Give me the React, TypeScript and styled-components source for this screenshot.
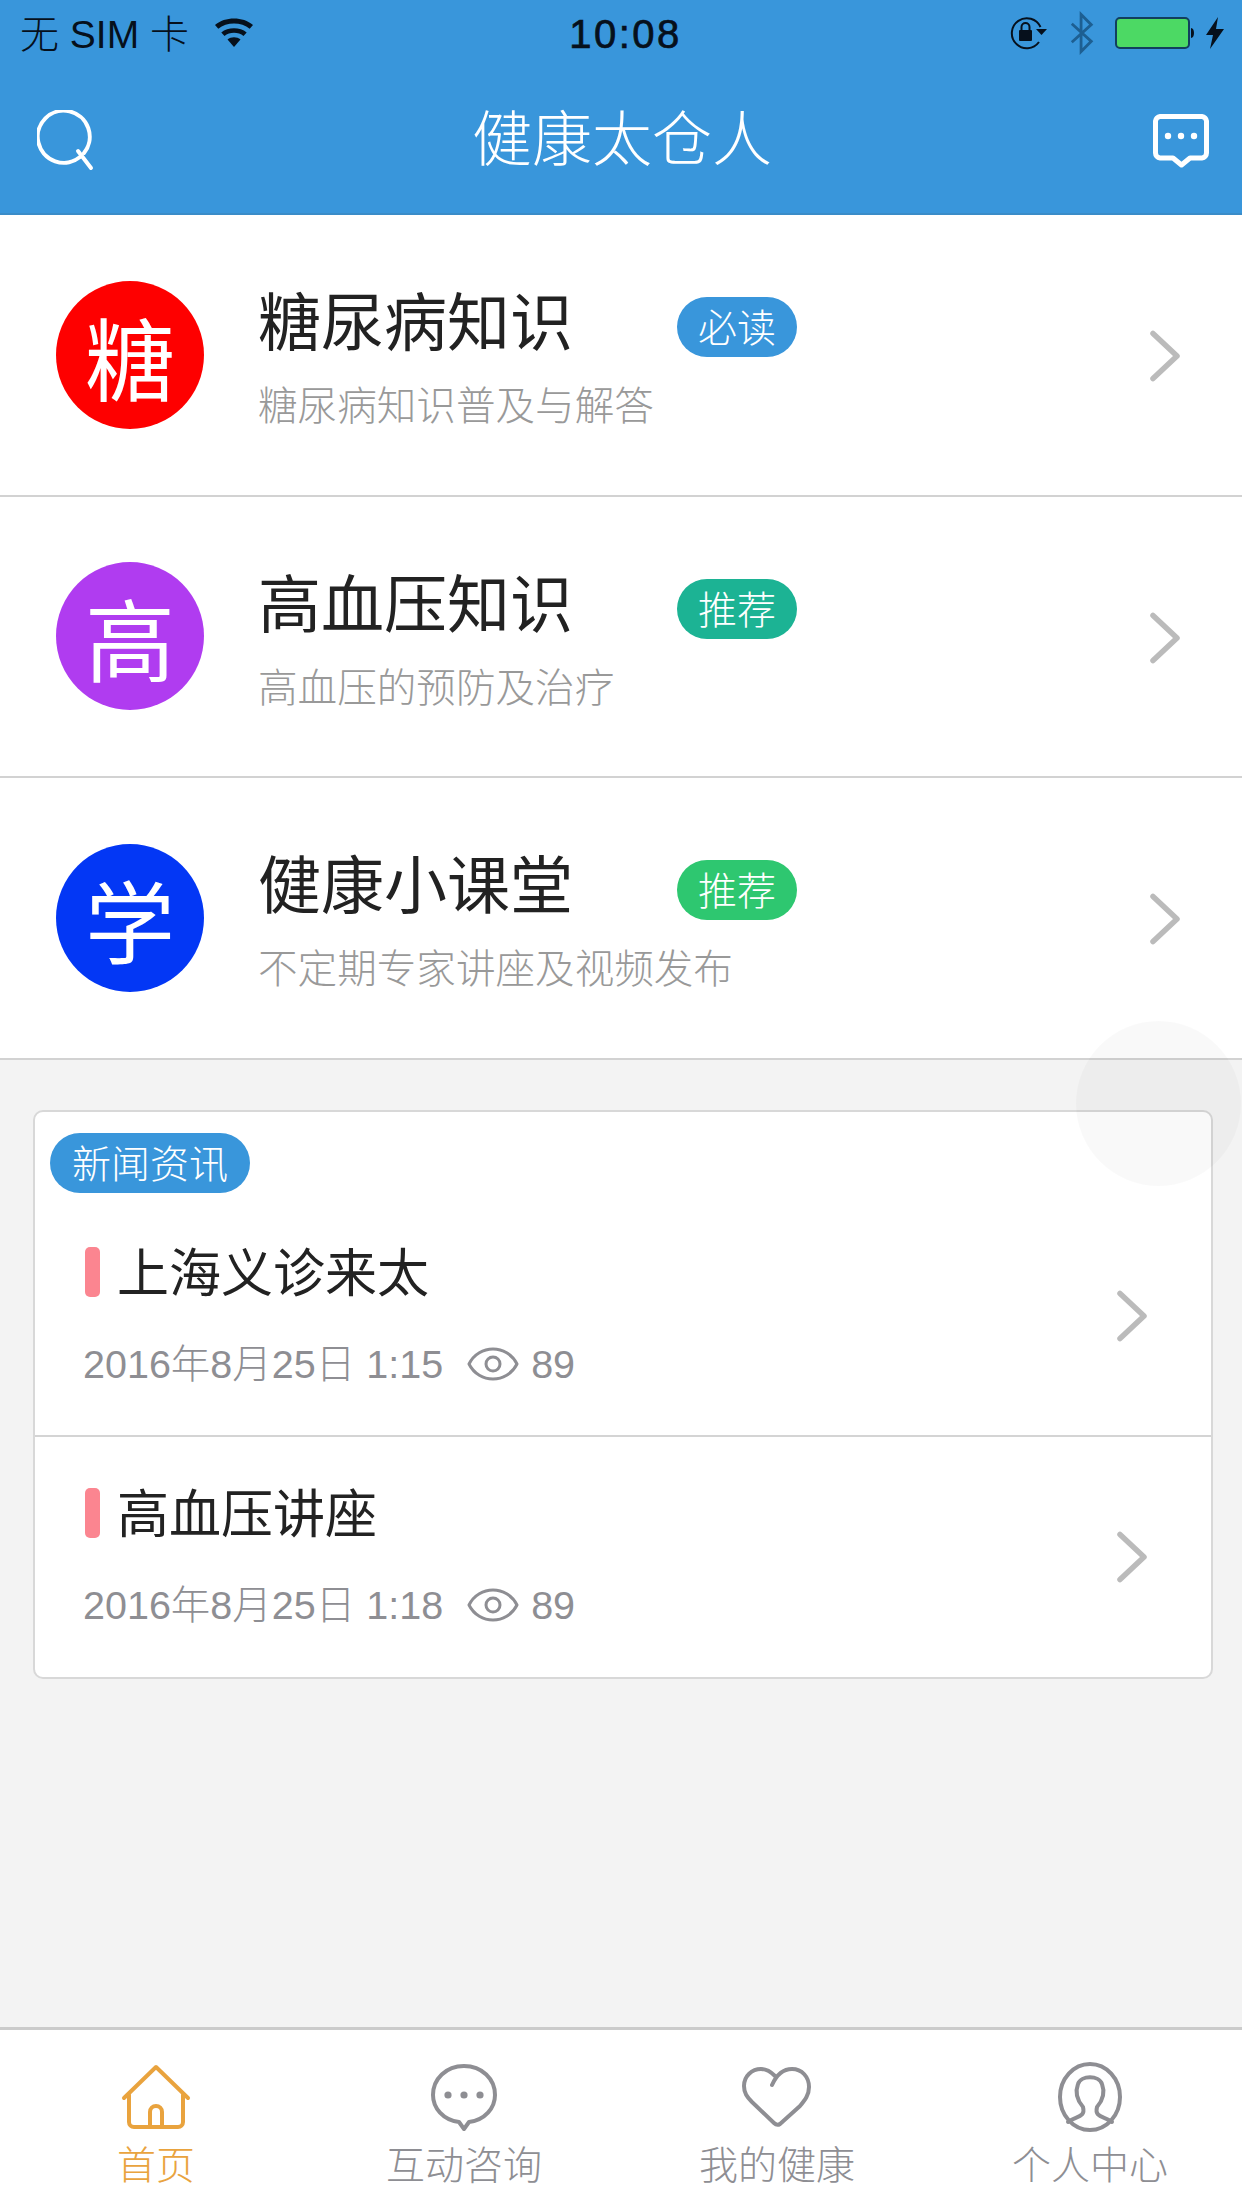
import React from 'react';
import styled, { createGlobalStyle } from 'styled-components';

const Global = createGlobalStyle`
  html, body { margin: 0; padding: 0; background: #f3f3f3; }
  body { font-family: "Liberation Sans", "Noto Sans CJK SC", sans-serif; }
  * { box-sizing: border-box; }
`;

const Page = styled.div`
  position: relative;
  width: 1242px;
  height: 2208px;
  display: flex;
  flex-direction: column;
  overflow: hidden;
  background: #f3f3f3;
`;

const TopBlock = styled.header`
  height: 215px;
  background: #3996db;
  border-bottom: 2px solid #3a8cc8;
  display: flex;
  flex-direction: column;
`;

const StatusBar = styled.div`
  height: 66px;
  padding: 0 17px 0 20px;
  display: grid;
  grid-template-columns: 1fr auto 1fr;
  align-items: center;
  color: #06101c;
`;

const StatusLeft = styled.div`
  display: flex;
  align-items: center;
  gap: 24px;
  font-size: 39px;
  font-weight: 300;
`;

const StatusText = styled.span`
  margin-bottom: 4px;
`;

const Time = styled.div`
  font-size: 40px;
  letter-spacing: 2.5px;
  margin: 2px 0 0 6px;
  font-family: "Liberation Sans", sans-serif;
  -webkit-text-stroke: 0.7px #06101c;
`;

const StatusRight = styled.div`
  display: flex;
  justify-content: flex-end;
  align-items: center;
  gap: 20px;
`;

const PowerGroup = styled.div`
  display: flex;
  align-items: center;
  gap: 8px;
`;

const NavBar = styled.div`
  flex: 1;
  display: flex;
  align-items: center;
  justify-content: space-between;
  padding: 3px 33px 0 37px;
`;

const NavTitle = styled.div`
  color: #fff;
  font-size: 60px;
  font-weight: 300;
  margin: 0 6px 14px 0;
`;

const List = styled.section`
  background: #fff;
`;

const Row = styled.div`
  height: 281.5px;
  border-bottom: 2px solid #d2d2d2;
  display: flex;
  align-items: center;
  padding: 0 61px 0 56px;
`;

const Avatar = styled.div<{ $bg: string }>`
  width: 148px;
  height: 148px;
  border-radius: 50%;
  background: ${p => p.$bg};
  color: #fff;
  font-size: 90px;
  font-weight: 400;
  display: flex;
  align-items: center;
  justify-content: center;
  flex: none;
  margin-right: 54px;
`;

const RowBody = styled.div`
  flex: 1;
  display: flex;
  flex-direction: column;
  gap: 20px;
  padding-top: 7px;
`;

const TitleLine = styled.div`
  display: flex;
  align-items: center;
`;

const RowTitle = styled.div`
  width: 419px;
  font-size: 63px;
  line-height: 76px;
  color: #222;
  font-weight: 400;
`;

const Tag = styled.span<{ $bg: string }>`
  width: 120px;
  height: 60px;
  border-radius: 30px;
  background: ${p => p.$bg};
  color: #fff;
  font-size: 39px;
  font-weight: 300;
  padding-bottom: 4px;
  display: flex;
  align-items: center;
  justify-content: center;
  margin-top: 8px;
`;

const RowSub = styled.div`
  font-size: 39.6px;
  line-height: 50px;
  color: #999;
  font-weight: 300;
`;

const Content = styled.main`
  flex: 1;
  padding: 50px 29px 0 33px;
`;

const Card = styled.section`
  height: 569px;
  background: #fff;
  border: 2px solid #d8d8d8;
  border-radius: 10px;
  display: flex;
  flex-direction: column;
  position: relative;
`;

const CardTag = styled.span`
  position: absolute;
  left: 15px;
  top: 21px;
  width: 200px;
  height: 60px;
  border-radius: 30px;
  background: #3996db;
  color: #fff;
  font-size: 39px;
  font-weight: 300;
  padding-bottom: 4px;
  display: flex;
  align-items: center;
  justify-content: center;
`;

const NewsRow = styled.div<{ $first?: boolean }>`
  flex: none;
  height: ${p => (p.$first ? 325 : 241)}px;
  padding: ${p => (p.$first ? 132 : 48)}px 63px 0 50px;
  border-bottom: ${p => (p.$first ? '2px solid #d4d4d4' : 'none')};
  display: flex;
  align-items: flex-start;
  justify-content: space-between;
`;

const NewsBody = styled.div`
  display: flex;
  flex-direction: column;
  gap: 35px;
`;

const NewsTitleLine = styled.div`
  display: flex;
  align-items: center;
  gap: 17px;
`;

const Mark = styled.i`
  width: 15px;
  height: 50px;
  border-radius: 5px;
  background: #fb8590;
  margin-top: -3px;
`;

const NewsTitle = styled.div`
  font-size: 52px;
  line-height: 60px;
  color: #222;
  font-weight: 400;
`;

const Meta = styled.div`
  display: flex;
  align-items: center;
  font-size: 39.5px;
  line-height: 50px;
  color: #8e8e93;
  font-weight: 300;
  margin-left: -2px;
`;

const Views = styled.span`
  display: flex;
  align-items: center;
  gap: 12px;
  margin-left: 24px;
`;

const ChevronBox = styled.div<{ $top?: number }>`
  display: flex;
  flex: none;
  margin-top: ${p => p.$top ?? 0}px;
`;

const Floating = styled.div`
  position: absolute;
  left: 1076px;
  top: 1021px;
  width: 165px;
  height: 165px;
  border-radius: 50%;
  background: rgba(0, 0, 0, 0.022);
  pointer-events: none;
`;

const TabBar = styled.nav`
  height: 181px;
  background: #fff;
  border-top: 3px solid #cbcbcb;
  display: grid;
  grid-template-columns: 312px 304px 322px 304px;
`;

const Tab = styled.div<{ $active?: boolean }>`
  display: flex;
  flex-direction: column;
  align-items: center;
  padding-top: 32px;
  color: ${p => (p.$active ? '#e9a33e' : '#8e8e93')};
  font-size: 39px;
  line-height: 50px;
  font-weight: 300;
`;

const TabIcon = styled.svg`
  width: 70px;
  height: 70px;
  margin-bottom: 9px;
  fill: none;
  stroke: currentColor;
  stroke-width: 4;
  stroke-linecap: round;
  stroke-linejoin: round;
`;

const Chevron = () => (
  <svg width="32" height="52" viewBox="0 0 32 52" fill="none" stroke="#bbbbbb" strokeWidth="5.5" strokeLinecap="round" strokeLinejoin="round">
    <path d="M4 3.5 L28 26 L4 48.5" />
  </svg>
);

const rows = [
  { c: '糖', bg: '#fe0000', t: '糖尿病知识', tag: '必读', tagBg: '#3996db', s: '糖尿病知识普及与解答' },
  { c: '高', bg: '#b03cf0', t: '高血压知识', tag: '推荐', tagBg: '#1cb394', s: '高血压的预防及治疗' },
  { c: '学', bg: '#0337f5', t: '健康小课堂', tag: '推荐', tagBg: '#2ec770', s: '不定期专家讲座及视频发布' },
];

const news = [
  { t: '上海义诊来太', d: '2016年8月25日 1:15' },
  { t: '高血压讲座', d: '2016年8月25日 1:18' },
];

export default function App() {
  return (
    <Page>
      <Global />
      <TopBlock>
        <StatusBar>
          <StatusLeft>
            <StatusText>无 SIM 卡</StatusText>
            <svg width="42" height="32" viewBox="0 0 42 32" fill="#06101c">
              <path d="M21 30 L14.5 22.5 C18 19.5 24 19.5 27.5 22.5 Z" />
              <path d="M11.5 19 L8.3 15.4 C15 9.8 27 9.8 33.7 15.4 L30.5 19 C25.5 14.6 16.5 14.6 11.5 19 Z" />
              <path d="M5.3 11.8 L2 8 C12 -0.6 30 -0.6 40 8 L36.7 11.8 C28.5 4.6 13.5 4.6 5.3 11.8 Z" />
            </svg>
          </StatusLeft>
          <Time>10:08</Time>
          <StatusRight>
            <svg width="40" height="36" viewBox="0 0 40 36" fill="none">
              <path d="M30 27 A15 15 0 1 1 31.5 12" stroke="#06101c" strokeWidth="2" />
              <rect x="10" y="15" width="13" height="11" rx="1" fill="#06101c" />
              <path d="M12.5 15 V12 A4 4 0 0 1 20.5 12 V15" stroke="#06101c" strokeWidth="2" />
              <path d="M27 14 H38 L32.5 20 Z" fill="#06101c" />
            </svg>
            <svg width="26" height="44" viewBox="0 0 28 44" fill="none" stroke="#1d5f92" strokeWidth="3">
              <path d="M3 12 L24 31 L13 42 V2 L24 13 L3 32" />
            </svg>
            <PowerGroup>
              <svg width="82" height="32" viewBox="0 0 82 32">
                <rect x="1" y="1" width="73" height="30" rx="4" fill="#4cd964" stroke="#123f5e" strokeWidth="2" />
                <path d="M76 11 C80 11 80 21 76 21 Z" fill="#06101c" />
              </svg>
              <svg width="20" height="32" viewBox="0 0 20 32" fill="#06101c">
                <path d="M13 0 L1 18 H8 L5 32 L19 12 H11 Z" />
              </svg>
            </PowerGroup>
          </StatusRight>
        </StatusBar>
        <NavBar>
          <svg width="60" height="62" viewBox="0 0 60 62" fill="none" stroke="#fff" strokeWidth="4" strokeLinecap="round">
            <path d="M43 47 A26 26 0 1 1 47 43" />
            <path d="M41 41 L54 58" />
          </svg>
          <NavTitle>健康太仓人</NavTitle>
          <svg width="56" height="54" viewBox="0 0 56 54" fill="none" stroke="#fff" strokeWidth="5" strokeLinejoin="round" strokeLinecap="round">
            <path d="M20 44 H7 A5 5 0 0 1 2.5 39 V7 A5 5 0 0 1 7 2.5 H49 A5 5 0 0 1 53.5 7 V39 A5 5 0 0 1 49 44 H37 L28.5 51 Z" />
            <circle cx="15" cy="22" r="3.2" fill="#fff" stroke="none" />
            <circle cx="28" cy="22" r="3.2" fill="#fff" stroke="none" />
            <circle cx="41" cy="22" r="3.2" fill="#fff" stroke="none" />
          </svg>
        </NavBar>
      </TopBlock>

      <List>
        {rows.map(r => (
          <Row key={r.t}>
            <Avatar $bg={r.bg}>{r.c}</Avatar>
            <RowBody>
              <TitleLine>
                <RowTitle>{r.t}</RowTitle>
                <Tag $bg={r.tagBg}>{r.tag}</Tag>
              </TitleLine>
              <RowSub>{r.s}</RowSub>
            </RowBody>
            <ChevronBox $top={3}><Chevron /></ChevronBox>
          </Row>
        ))}
      </List>

      <Content>
        <Card>
          <CardTag>新闻资讯</CardTag>
          {news.map((n, i) => (
            <NewsRow key={n.t} $first={i === 0}>
              <NewsBody>
                <NewsTitleLine>
                  <Mark />
                  <NewsTitle>{n.t}</NewsTitle>
                </NewsTitleLine>
                <Meta>
                  {n.d}
                  <Views>
                    <svg width="52" height="36" viewBox="0 0 52 36" fill="none" stroke="#8e8e93" strokeWidth="3">
                      <path d="M2 18 C12 -2 40 -2 50 18 C40 38 12 38 2 18 Z" strokeLinejoin="round" />
                      <circle cx="26" cy="18" r="7" />
                    </svg>
                    89
                  </Views>
                </Meta>
              </NewsBody>
              <ChevronBox $top={46}><Chevron /></ChevronBox>
            </NewsRow>
          ))}
        </Card>
      </Content>

      <TabBar>
        <Tab $active>
          <TabIcon viewBox="0 0 70 70">
            <path d="M3 36 L35 5 L67 36" />
            <path d="M8 33 V60 A5 5 0 0 0 13 65 H57 A5 5 0 0 0 62 60 V33" />
            <path d="M29 65 V50 A6 6 0 0 1 41 50 V65" />
          </TabIcon>
          首页
        </Tab>
        <Tab>
          <TabIcon viewBox="0 0 70 70">
            <path d="M30 60 C14 58 4 46 4 33 C4 17 17 4 35 4 C53 4 66 17 66 33 C66 46 56 58 40 60 L35 67 Z" />
            <circle cx="19" cy="33" r="3.6" fill="currentColor" stroke="none" />
            <circle cx="35" cy="33" r="3.6" fill="currentColor" stroke="none" />
            <circle cx="51" cy="33" r="3.6" fill="currentColor" stroke="none" />
          </TabIcon>
          互动咨询
        </Tab>
        <Tab>
          <TabIcon viewBox="0 0 70 70">
            <path d="M30 23 C34 14 41 7 50 7 C60 7 67 15 67 25 C67 33 63 38 58 44 L38 62 Q35 64 32 61 L10 40 C5 35 2 31 2 24 C2 14 10 7 19 7 C26 7 30 11 33 14" />
          </TabIcon>
          我的健康
        </Tab>
        <Tab>
          <TabIcon viewBox="0 0 70 70">
            <ellipse cx="35" cy="35" rx="30" ry="33" />
            <path d="M13 60 C20 54 31 56 28 45 C22 38 20 30 23 22 C26 13 44 13 47 22 C50 30 48 38 42 45 C39 56 50 54 57 60" />
          </TabIcon>
          个人中心
        </Tab>
      </TabBar>

      <Floating />
    </Page>
  );
}
